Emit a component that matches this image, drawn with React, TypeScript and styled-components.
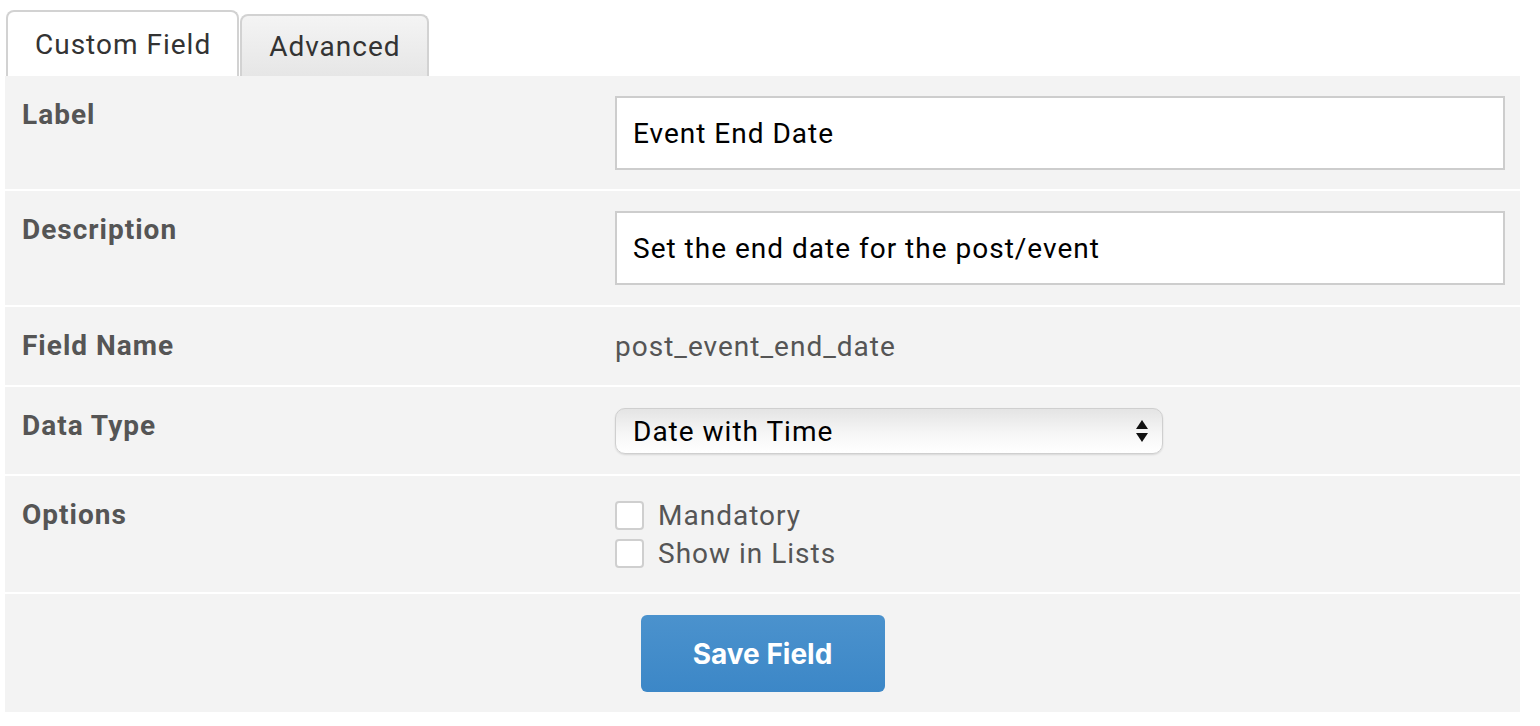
import React from 'react'
import styled, { createGlobalStyle } from 'styled-components'

const GlobalStyle = createGlobalStyle`
	html, body {
		margin: 0;
		padding: 0;
		background: #fff;
		font-family: Roboto, 'Liberation Sans', sans-serif;
		letter-spacing: 1px;
	}
`

const Page = styled.div`
	padding: 10px 20px 0 5px;
`

const TabBar = styled.div`
	display: flex;
	align-items: flex-end;
	padding-left: 1px;
`

const Tab = styled.div<{ $active?: boolean }>`
	box-sizing: border-box;
	height: ${(props) => (props.$active ? 66 : 62)}px;
	padding: 0 26px 0 27px;
	display: flex;
	align-items: center;
	font-size: 28px;
	color: #333;
	border: 2px solid #d2d2d2;
	border-bottom: none;
	border-radius: 8px 8px 0 0;
	background: ${(props) =>
		props.$active ? '#fff' : 'linear-gradient(#f4f4f4, #e6e6e6)'};
	margin-right: 1px;
`

const Table = styled.div`
	display: flex;
	flex-direction: column;
	gap: 2px;
`

const Row = styled.div`
	display: grid;
	grid-template-columns: 593px 1fr;
	background: #f3f3f3;
`

const LabelCell = styled.div`
	padding: 19px 17px 0 17px;
	font-size: 28px;
	line-height: 39px;
	font-weight: 700;
	color: #555;
`

const ValueCell = styled.div<{ $pt?: number; $pb?: number }>`
	padding: ${(props) => props.$pt ?? 20}px 15px ${(props) => props.$pb ?? 19}px 17px;
	font-size: 28px;
	line-height: 39px;
	color: #555;
`

const TextInput = styled.input`
	box-sizing: border-box;
	display: block;
	width: 100%;
	height: 74px;
	border: 2px solid #cdcdcd;
	border-radius: 0;
	background: #fff;
	padding: 0 16px;
	font-family: Roboto, 'Liberation Sans', sans-serif;
	font-size: 28px;
	letter-spacing: 1px;
	color: #000;
	outline: none;
`

const SelectWrap = styled.div`
	position: relative;
	width: 548px;
	height: 46px;
`

const Select = styled.select`
	box-sizing: border-box;
	appearance: none;
	-webkit-appearance: none;
	width: 100%;
	height: 100%;
	border: 1px solid #cfcfcf;
	border-radius: 10px;
	background: linear-gradient(#e4e4e4, #f6f6f6 55%, #fff);
	box-shadow: 0 1px 2px rgba(0, 0, 0, 0.12);
	padding: 0 40px 0 17px;
	font-family: Roboto, 'Liberation Sans', sans-serif;
	font-size: 28px;
	letter-spacing: 1px;
	color: #000;
	outline: none;
`

const Arrows = styled.svg`
	position: absolute;
	right: 14px;
	top: 11px;
	pointer-events: none;
`

const OptionLine = styled.label`
	display: flex;
	align-items: center;
	gap: 14px;
	height: 38px;
	color: #555;
`

const Checkbox = styled.input`
	appearance: none;
	-webkit-appearance: none;
	box-sizing: border-box;
	margin: 0;
	width: 29px;
	height: 29px;
	border: 2px solid #cfcfcf;
	border-radius: 4px;
	background: #fff;
`

const ButtonRow = styled.div`
	background: #f3f3f3;
	display: flex;
	justify-content: center;
	padding: 21px 0 20px;
`

const SaveButton = styled.button`
	width: 244px;
	height: 77px;
	border: none;
	border-radius: 6px;
	background: linear-gradient(#4b92cd, #3c87c7);
	color: #fff;
	font-family: Inter, 'Liberation Sans', sans-serif;
	font-weight: 700;
	font-size: 28px;
	letter-spacing: 0;
	cursor: pointer;
`

const App = () => {
	return (
		<>
			<GlobalStyle />
			<Page>
				<TabBar>
					<Tab $active>Custom Field</Tab>
					<Tab>Advanced</Tab>
				</TabBar>
				<Table>
					<Row>
						<LabelCell>Label</LabelCell>
						<ValueCell>
							<TextInput defaultValue="Event End Date" />
						</ValueCell>
					</Row>
					<Row>
						<LabelCell>Description</LabelCell>
						<ValueCell $pt={20} $pb={20}>
							<TextInput defaultValue="Set the end date for the post/event" />
						</ValueCell>
					</Row>
					<Row>
						<LabelCell>Field Name</LabelCell>
						<ValueCell>post_event_end_date</ValueCell>
					</Row>
					<Row>
						<LabelCell>Data Type</LabelCell>
						<ValueCell $pt={21} $pb={20}>
							<SelectWrap>
								<Select defaultValue="datetime">
									<option value="datetime">Date with Time</option>
									<option value="date">Date</option>
									<option value="text">Text</option>
								</Select>
								<Arrows width="14" height="24" viewBox="0 0 14 24">
									<path d="M7 1 L13 10 L1 10 Z" fill="#111" />
									<path d="M1 14 L13 14 L7 23 Z" fill="#111" />
								</Arrows>
							</SelectWrap>
						</ValueCell>
					</Row>
					<Row>
						<LabelCell>Options</LabelCell>
						<ValueCell $pt={20} $pb={20}>
							<OptionLine>
								<Checkbox type="checkbox" />
								Mandatory
							</OptionLine>
							<OptionLine>
								<Checkbox type="checkbox" />
								Show in Lists
							</OptionLine>
						</ValueCell>
					</Row>
					<ButtonRow>
						<SaveButton>Save Field</SaveButton>
					</ButtonRow>
				</Table>
			</Page>
		</>
	)
}

export default App
